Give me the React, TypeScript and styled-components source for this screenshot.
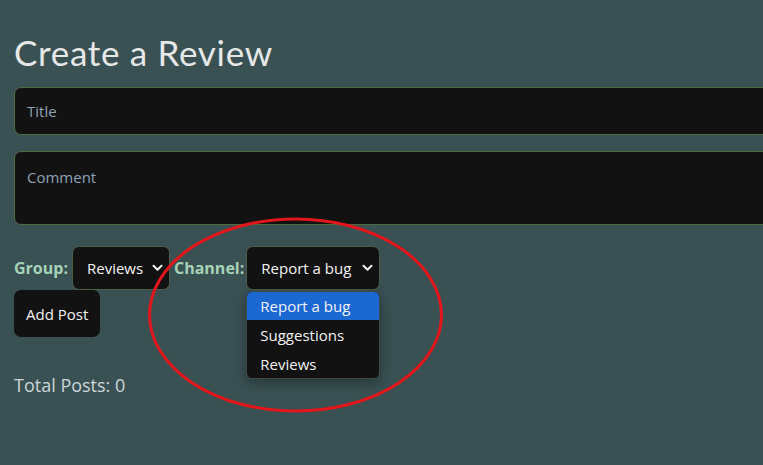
import React from "react";
import styled, { createGlobalStyle } from "styled-components";

const Global = createGlobalStyle`
  html, body { margin: 0; padding: 0; background: #3a5153; overflow: hidden; }
  body { font-family: "Open Sans", "Noto Sans", sans-serif; }
`;

const Page = styled.div`
  position: relative;
  width: 763px;
  height: 465px;
  padding: 26px 0 0 14px;
  box-sizing: border-box;
  overflow: hidden;
  display: flex;
  flex-direction: column;
  align-items: flex-start;
`;

const Heading = styled.h1`
  margin: 0 0 9px 0;
  font-family: "Lato", "Open Sans", sans-serif;
  font-weight: 400;
  font-size: 35px;
  line-height: 52px;
  letter-spacing: 0.7px;
  color: #e6e8e8;
`;

const Field = styled.div<{ $h: number }>`
  flex: none;
  width: 800px;
  height: ${(p) => p.$h}px;
  box-sizing: border-box;
  background: #121212;
  border: 1px solid #4d6b3e;
  border-radius: 7px;
  padding: ${(p) => (p.$h > 60 ? "15px 12px" : "0 12px")};
  display: flex;
  align-items: ${(p) => (p.$h > 60 ? "flex-start" : "center")};
  margin-bottom: 16px;
  font-size: 15px;
  color: #8fa2b6;
`;

const Row = styled.div`
  display: flex;
  align-items: center;
  gap: 4px;
  height: 44px;
  margin-top: 5px;
`;

const Label = styled.span`
  font-weight: 700;
  font-size: 16px;
  color: #a6d3b8;
`;

const SelectWrap = styled.div`
  position: relative;
  margin-left: -2px;
`;

const Select = styled.div<{ $w: number }>`
  width: ${(p) => p.$w}px;
  height: 44px;
  box-sizing: border-box;
  background: #121212;
  border: 1px solid #4b5e45;
  border-radius: 7px;
  display: flex;
  align-items: center;
  justify-content: space-between;
  padding: 0 6px 0 14px;
  font-size: 15px;
  color: #f2f2f2;
`;

const Menu = styled.div`
  position: absolute;
  left: 0;
  top: 45px;
  width: 134px;
  box-sizing: border-box;
  background: #121212;
  border: 1px solid #3d4a4b;
  border-radius: 6px;
  overflow: hidden;
  box-shadow: 0 4px 14px rgba(0, 0, 0, 0.35);
  z-index: 2;
`;

const Option = styled.div<{ $active?: boolean }>`
  height: ${(p) => (p.$active ? 28 : 29)}px;
  display: flex;
  align-items: center;
  padding-left: 13px;
  font-size: 15px;
  color: #f2f2f2;
  background: ${(p) => (p.$active ? "#1b68d3" : "transparent")};
`;

const Button = styled.button`
  display: block;
  height: 47px;
  padding: 0 12px;
  background: #121212;
  border: none;
  border-radius: 7px;
  font-family: "Open Sans", "Noto Sans", sans-serif;
  font-size: 15px;
  color: #f2f2f2;
  margin-top: 0;
`;

const Total = styled.div`
  margin-top: 36px;
  font-size: 18px;
  color: #ccd6da;
`;

const Annotation = styled.svg`
  position: absolute;
  left: 0;
  top: 0;
  pointer-events: none;
  z-index: 3;
`;

const Chevron = () => (
  <svg width="11" height="8" viewBox="0 0 11 8">
    <path d="M1.5 1.8 L5.5 5.8 L9.5 1.8" fill="none" stroke="#f2f2f2" strokeWidth="2" strokeLinecap="round" strokeLinejoin="round" />
  </svg>
);

export default function App() {
  return (
    <>
      <Global />
      <Page>
        <Heading>Create a Review</Heading>
        <Field $h={48}>Title</Field>
        <Field $h={74}>Comment</Field>
        <Row>
          <Label>Group:</Label>
          <Select $w={98}>
            Reviews <Chevron />
          </Select>
          <Label>Channel:</Label>
          <SelectWrap>
            <Select $w={134}>
              Report a bug <Chevron />
            </Select>
            <Menu>
              <Option $active>Report a bug</Option>
              <Option>Suggestions</Option>
              <Option>Reviews</Option>
            </Menu>
          </SelectWrap>
        </Row>
        <Button>Add Post</Button>
        <Total>Total Posts: 0</Total>
        <Annotation width="763" height="465">
          <ellipse cx="295.5" cy="315" rx="146" ry="96" fill="none" stroke="#e3161c" strokeWidth="3" />
        </Annotation>
      </Page>
    </>
  );
}
